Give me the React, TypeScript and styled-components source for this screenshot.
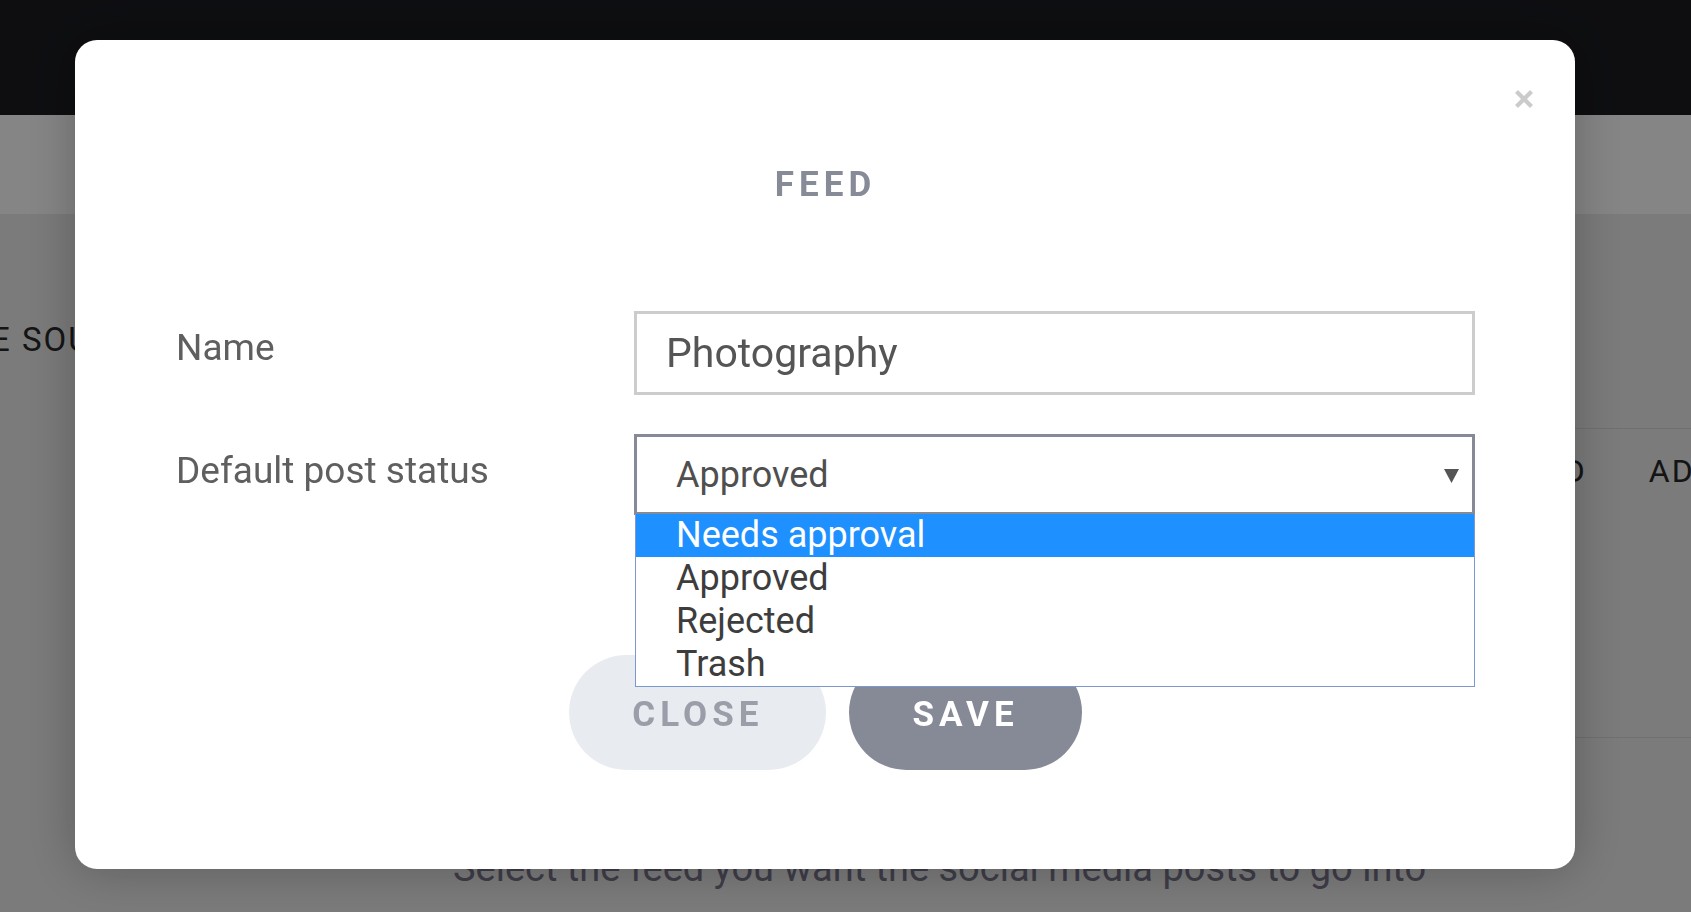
import React from "react";
import styled, { createGlobalStyle } from "styled-components";

const GlobalStyle = createGlobalStyle`
  html, body {
    margin: 0;
    padding: 0;
  }
  body {
    width: 1691px;
    height: 912px;
    overflow: hidden;
    background: #ebebeb;
    font-family: Roboto, "Liberation Sans", Arial, sans-serif;
  }
  * {
    box-sizing: border-box;
  }
`;

// Страница под модальным окном
const Page = styled.div`
  width: 1691px;
  height: 912px;
  overflow: hidden;
  background: #ebebeb;
`;

const TopBar = styled.header`
  height: 115px;
  background: #1b1c21;
`;

const SubBar = styled.nav`
  height: 99px;
  background: #ffffff;
`;

const Main = styled.main`
  padding-top: 107px;
`;

const StepTitle = styled.h2`
  margin: 0 0 0 -129px;
  font: 400 33px/1.172 Roboto, "Liberation Sans", sans-serif;
  letter-spacing: 2px;
  color: #282828;
  white-space: nowrap;
`;

const Table = styled.div`
  margin: 68px 0 0 240px;
  height: 310px;
  border-top: 1px solid #d6d6d6;
  border-bottom: 1px solid #d6d6d6;
`;

const HeaderRow = styled.div`
  display: flex;
  gap: 62px;
  padding: 24px 0 0 1194px;
  white-space: nowrap;
`;

const HeaderCell = styled.span`
  font: 400 32px/1.172 Roboto, "Liberation Sans", sans-serif;
  letter-spacing: 2px;
  color: #282828;
`;

const Hint = styled.p`
  margin: 108px 0 0 453px;
  font: 400 38px/1.172 Roboto, "Liberation Sans", sans-serif;
  color: #77758a;
  white-space: nowrap;
`;

// Модальное окно
const Backdrop = styled.div`
  position: fixed;
  inset: 0;
  background: rgba(0, 0, 0, 0.48);
  padding: 40px 0 0 75px;
`;

const Modal = styled.div`
  position: relative;
  width: 1500px;
  background: #ffffff;
  border-radius: 22px;
  padding: 124px 100px 99px 101px;
  box-shadow: 0 0 50px rgba(0, 0, 0, 0.25);
`;

const CloseIcon = styled.button`
  position: absolute;
  top: 49px;
  right: 41px;
  width: 20px;
  height: 20px;
  padding: 0;
  border: none;
  background: none;
  cursor: pointer;
  display: flex;
`;

const Title = styled.h1`
  margin: 0;
  text-align: center;
  font: 700 35px/41px Roboto, "Liberation Sans", sans-serif;
  letter-spacing: 5px;
  color: #878a97;
`;

const Form = styled.div`
  display: grid;
  grid-template-columns: 458px 1fr;
  row-gap: 39px;
  margin-top: 106px;
`;

const Label = styled.label`
  padding-top: 15px;
  font: 400 37px/1.172 Roboto, "Liberation Sans", sans-serif;
  color: #5f5f5f;
`;

const TextInput = styled.input`
  width: 100%;
  height: 84px;
  border: 3px solid #cccccc;
  padding: 0 29px 1px;
  font: 400 41px Roboto, "Liberation Sans", sans-serif;
  color: #555555;
  background: #ffffff;
  outline: none;
  border-radius: 0;
`;

const SelectWrap = styled.div`
  position: relative;
`;

const SelectBox = styled.div`
  height: 81px;
  border: 3px solid #868996;
  display: flex;
  align-items: center;
  justify-content: space-between;
  padding: 2px 13px 0 39px;
  font: 400 36px/1.172 Roboto, "Liberation Sans", sans-serif;
  color: #4f4f4f;
  background: #ffffff;
`;

const OptionList = styled.ul`
  position: absolute;
  top: calc(100% - 1px);
  left: 1px;
  right: 0;
  margin: 0;
  padding: 0;
  list-style: none;
  background: #ffffff;
  border: 1px solid #7b98cf;
  border-top: none;
  z-index: 2;
`;

const Option = styled.li<{ $active?: boolean }>`
  height: 43px;
  padding-left: 40px;
  font: 400 36px/43px Roboto, "Liberation Sans", sans-serif;
  color: ${({ $active }) => ($active ? "#ffffff" : "#3d3d3d")};
  background: ${({ $active }) => ($active ? "#1e90ff" : "transparent")};
  white-space: nowrap;
`;

const Actions = styled.div`
  display: flex;
  justify-content: center;
  gap: 23px;
  margin-top: 140px;
`;

const PillButton = styled.button<{ $variant: "light" | "dark" }>`
  height: 115px;
  padding: 4px 63px 0;
  border: none;
  border-radius: 58px;
  font: 700 35px/41px Roboto, "Liberation Sans", sans-serif;
  letter-spacing: 5px;
  background: ${({ $variant }) => ($variant === "dark" ? "#868996" : "#e8ebf0")};
  color: ${({ $variant }) => ($variant === "dark" ? "#ffffff" : "#9b9da8")};
  cursor: pointer;
`;

const options = ["Needs approval", "Approved", "Rejected", "Trash"];

export default function App() {
  return (
    <>
      <GlobalStyle />
      <Page>
        <TopBar />
        <SubBar />
        <Main>
          <StepTitle>CHOOSE SOURCE</StepTitle>
          <Table>
            <HeaderRow>
              <HeaderCell>UPDATED</HeaderCell>
              <HeaderCell>ADDED BY</HeaderCell>
            </HeaderRow>
          </Table>
          <Hint>Select the feed you want the social media posts to go into</Hint>
        </Main>
      </Page>

      <Backdrop>
        <Modal>
          <CloseIcon aria-label="Close">
            <svg width="20" height="20" viewBox="0 0 20 20">
              <path d="M2.5 2.5 L17.5 17.5 M17.5 2.5 L2.5 17.5" stroke="#cbcbcb" strokeWidth="4.2" />
            </svg>
          </CloseIcon>
          <Title>FEED</Title>
          <Form>
            <Label>Name</Label>
            <TextInput defaultValue="Photography" readOnly />
            <Label>Default post status</Label>
            <SelectWrap>
              <SelectBox>
                <span>Approved</span>
                <svg width="15" height="14" viewBox="0 0 15 14">
                  <polygon points="0,0 15,0 7.5,14" fill="#555555" />
                </svg>
              </SelectBox>
              <OptionList>
                {options.map((o, i) => (
                  <Option key={o} $active={i === 0}>
                    {o}
                  </Option>
                ))}
              </OptionList>
            </SelectWrap>
          </Form>
          <Actions>
            <PillButton $variant="light">CLOSE</PillButton>
            <PillButton $variant="dark">SAVE</PillButton>
          </Actions>
        </Modal>
      </Backdrop>
    </>
  );
}
